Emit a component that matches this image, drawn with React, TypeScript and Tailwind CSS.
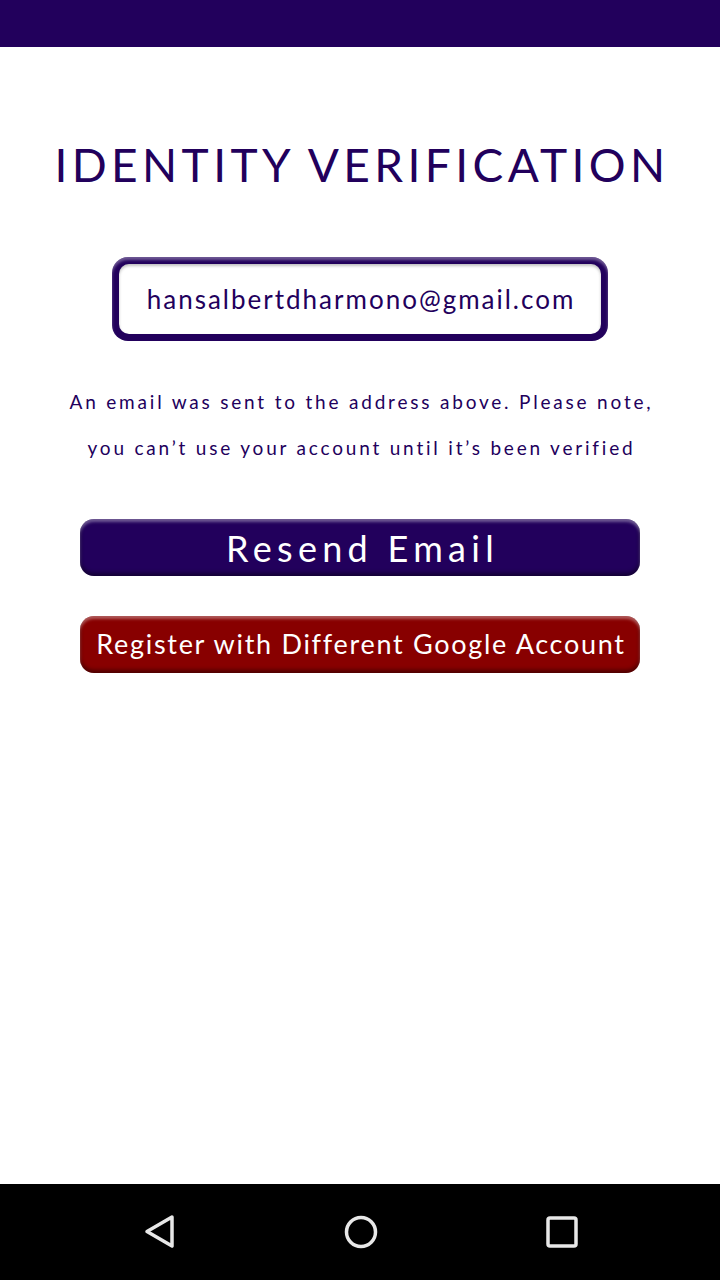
import React from 'react';

const font = { fontFamily: '"Lato", "Noto Sans", sans-serif' };

const NavBar: React.FC = () => (
    <div className="h-[96px] bg-black flex items-center justify-between pl-[143px] pr-[141px]">
        <svg width="34" height="36" viewBox="0 0 34 36" fill="none">
            <path d="M29 3 L4 17.5 L29 32 Z" stroke="#e8e8e8" strokeWidth="3.5" strokeLinejoin="round" />
        </svg>
        <svg width="34" height="34" viewBox="0 0 34 34" fill="none">
            <circle cx="17" cy="17" r="14.5" stroke="#e8e8e8" strokeWidth="3.5" />
        </svg>
        <svg width="34" height="34" viewBox="0 0 34 34" fill="none">
            <rect x="3" y="3" width="28" height="28" rx="2" stroke="#e8e8e8" strokeWidth="3.5" />
        </svg>
    </div>
);

export default function App() {
    return (
        <div className="w-[720px] h-[1280px] flex flex-col bg-white" style={font}>
            <div className="h-[47px] bg-[#22005c]" />

            <div className="flex-1 flex flex-col items-center">
                <h1 className="mt-[86px] pl-[4px] text-[46px] leading-[64px] text-[#22005c] tracking-[4.4px] whitespace-nowrap font-normal">
                    IDENTITY VERIFICATION
                </h1>

                <div className="mt-[60px] w-[496px] h-[84px] rounded-[16px] bg-[#22005c] p-[7px] shadow-[inset_0_3px_3px_rgba(255,255,255,0.35)]">
                    <div className="w-full h-full rounded-[10px] bg-white flex items-center justify-center shadow-[inset_0_2px_3px_rgba(0,0,0,0.25)]">
                        <span className="text-[26px] text-[#22005c] tracking-[2px] pl-[2px] whitespace-nowrap">hansalbertdharmono@gmail.com</span>
                    </div>
                </div>

                <p className="mt-[38px] pl-[3px] text-center text-[19px] leading-[46px] text-[#22005c] tracking-[2.8px] whitespace-nowrap">
                    An email was sent to the address above. Please note,
                    <br />
                    you can’t use your account until it’s been verified
                </p>

                <button className="mt-[48px] w-[560px] h-[57px] rounded-[14px] bg-[#22005c] text-white text-[36px] tracking-[5.3px] pl-[5px] flex items-center justify-center shadow-[inset_0_3px_3px_rgba(255,255,255,0.35),inset_0_-3px_4px_rgba(0,0,0,0.45)]">
                    Resend Email
                </button>

                <button className="mt-[40px] w-[560px] h-[57px] rounded-[14px] bg-[#880000] text-white text-[27px] tracking-[1.7px] pl-[2px] flex items-center justify-center whitespace-nowrap shadow-[inset_0_3px_3px_rgba(255,255,255,0.35),inset_0_-3px_4px_rgba(0,0,0,0.45)]">
                    Register with Different Google Account
                </button>
            </div>

            <NavBar />
        </div>
    );
}
